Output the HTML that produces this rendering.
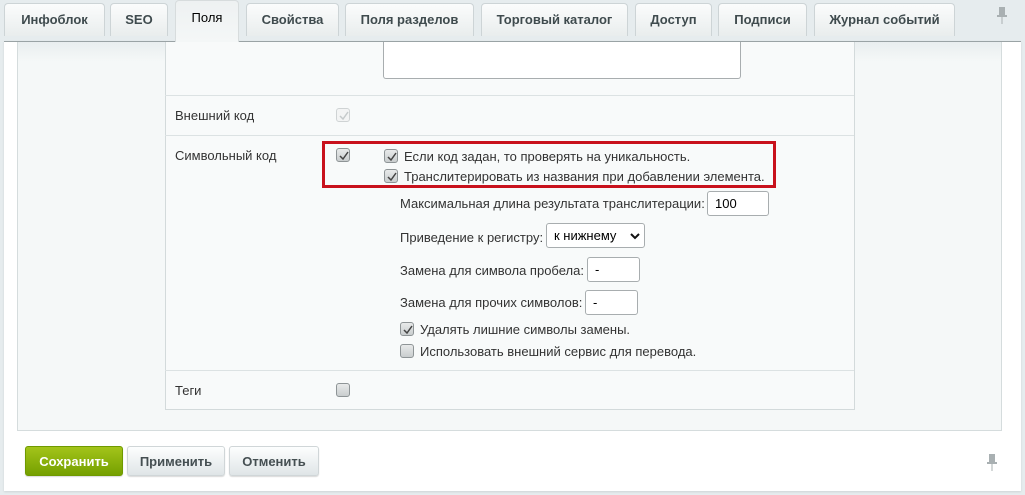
<!DOCTYPE html>
<html><head><meta charset="utf-8"><style>
*{box-sizing:border-box;margin:0;padding:0}
body{width:1025px;height:495px;background:#e6ecee;font-family:"Liberation Sans",Arial,sans-serif;font-size:13px;color:#333;position:relative;overflow:hidden}
.a{position:absolute}
.tab{position:absolute;top:3px;height:33px;background:linear-gradient(#fbfcfc,#e9eded);border:1px solid #cdd4d6;border-bottom:none;border-radius:4px 4px 0 0;font-weight:bold;color:#3f4b4e;text-align:center;line-height:31px;font-size:13px}
.tab.on{top:0;height:42px;background:linear-gradient(#eef1f2,#f4f7f7);border-color:#d7dcdd;color:#000;font-weight:normal;line-height:34px;z-index:3}
.cb{position:absolute;width:14px;height:14px;border:1px solid #8e9496;border-radius:3px;background:linear-gradient(#e8eaea,#c9cdce)}
.cb svg{position:absolute;left:1px;top:1px}
.cb.dis{border-color:#cfd3d4;background:#f3f4f4}
.t{position:absolute;white-space:nowrap;color:#333}
.inp{position:absolute;height:25px;border:1px solid #a8adaf;border-radius:3px;background:#fff;padding-left:7px;line-height:23px;color:#000}
.line{position:absolute;height:1px;background:#dce2e3;left:165px;width:689px}
.btn{position:absolute;top:446px;height:30px;border-radius:3px;text-align:center;line-height:29px;font-weight:bold;font-size:13px;border:1px solid #d0d6d8;background:linear-gradient(#fdfefe,#dfe5e7);color:#454f52;box-shadow:0 1px 1px rgba(0,0,0,.15)}
</style></head><body>
<div class="tab" style="left:4px;width:101px">Инфоблок</div>
<div class="tab" style="left:110px;width:58px">SEO</div>
<div class="tab on" style="left:175px;width:64px">Поля</div>
<div class="tab" style="left:246px;width:93px">Свойства</div>
<div class="tab" style="left:345px;width:129px">Поля разделов</div>
<div class="tab" style="left:481px;width:147px">Торговый каталог</div>
<div class="tab" style="left:635px;width:77px">Доступ</div>
<div class="tab" style="left:718px;width:89px">Подписи</div>
<div class="tab" style="left:814px;width:141px">Журнал событий</div>
<svg class="a" style="left:996px;top:7px" width="12" height="18"><rect x="3" y="0" width="6" height="9" fill="#a9b0b2"/><rect x="1" y="8" width="10" height="2" fill="#a9b0b2"/><rect x="5.5" y="10" width="1" height="7" fill="#a9b0b2"/></svg>

<div class="a" style="left:4px;top:41px;width:1017px;height:450px;background:#fff;border-top:1px solid #9aa3a5;box-shadow:0 1px 2px rgba(0,0,0,.1)"></div>
<div class="a" style="left:17px;top:42px;width:985px;height:389px;background:linear-gradient(#e9eeef,#f5f8f8 20px);border:1px solid #d5dcdd;border-top:none"></div>
<div class="a" style="left:165px;top:42px;width:690px;height:368px;background:#f8fafa;border:1px solid #d3dadb;border-top:none"></div>
<div class="a" style="left:383px;top:42px;width:358px;height:37px;background:#fff;border:1px solid #a8adaf;border-top:none;border-radius:0 0 3px 3px"></div>
<div class="line" style="top:95px"></div>
<div class="line" style="top:135px"></div>
<div class="line" style="top:370px"></div>

<div class="t" style="left:175px;top:108px">Внешний код</div>
<div class="cb dis" style="left:336px;top:108px"><svg width="12" height="12"><path d="M2 6 L5 9 L10 2" stroke="#c5cacb" stroke-width="1.5" fill="none"/></svg></div>

<div class="t" style="left:175px;top:148px">Символьный код</div>
<div class="a" style="left:322px;top:141px;width:454px;height:47px;border:3px solid #c8111c"></div>
<div class="cb" style="left:336px;top:148px"><svg width="12" height="12"><path d="M2 6 L5 9 L10 2" stroke="#444" stroke-width="1.5" fill="none"/></svg></div>
<div class="cb" style="left:384px;top:149px"><svg width="12" height="12"><path d="M2 6 L5 9 L10 2" stroke="#444" stroke-width="1.5" fill="none"/></svg></div>
<div class="t" style="left:404px;top:149px">Если код задан, то проверять на уникальность.</div>
<div class="cb" style="left:384px;top:169px"><svg width="12" height="12"><path d="M2 6 L5 9 L10 2" stroke="#444" stroke-width="1.5" fill="none"/></svg></div>
<div class="t" style="left:404px;top:169px">Транслитерировать из названия при добавлении элемента.</div>

<div class="t" style="left:400px;top:196px">Максимальная длина результата транслитерации:</div>
<div class="inp" style="left:707px;top:191px;width:62px">100</div>
<div class="t" style="left:400px;top:230px">Приведение к регистру:</div>
<div class="inp" style="left:546px;top:223px;width:99px;color:#000">к нижнему<svg class="a" style="left:83px;top:9px" width="10" height="7"><path d="M1 1 L5 5 L9 1" stroke="#111" stroke-width="2" fill="none"/></svg></div>
<div class="t" style="left:400px;top:263px">Замена для символа пробела:</div>
<div class="inp" style="left:587px;top:257px;width:53px">-</div>
<div class="t" style="left:400px;top:295px">Замена для прочих символов:</div>
<div class="inp" style="left:585px;top:290px;width:53px">-</div>
<div class="cb" style="left:400px;top:322px"><svg width="12" height="12"><path d="M2 6 L5 9 L10 2" stroke="#444" stroke-width="1.5" fill="none"/></svg></div>
<div class="t" style="left:420px;top:322px">Удалять лишние символы замены.</div>
<div class="cb" style="left:400px;top:344px"></div>
<div class="t" style="left:420px;top:344px">Использовать внешний сервис для перевода.</div>

<div class="t" style="left:175px;top:383px">Теги</div>
<div class="cb" style="left:336px;top:383px"></div>

<div class="btn" style="left:25px;width:98px;background:linear-gradient(#a3c41a,#75a000);border-color:#6f9a00;color:#fff">Сохранить</div>
<div class="btn" style="left:127px;width:98px">Применить</div>
<div class="btn" style="left:229px;width:90px">Отменить</div>
<svg class="a" style="left:986px;top:454px" width="12" height="18"><rect x="3" y="0" width="6" height="9" fill="#a9b0b2"/><rect x="1" y="8" width="10" height="2" fill="#a9b0b2"/><rect x="5.5" y="10" width="1" height="7" fill="#a9b0b2"/></svg>
</body></html>
